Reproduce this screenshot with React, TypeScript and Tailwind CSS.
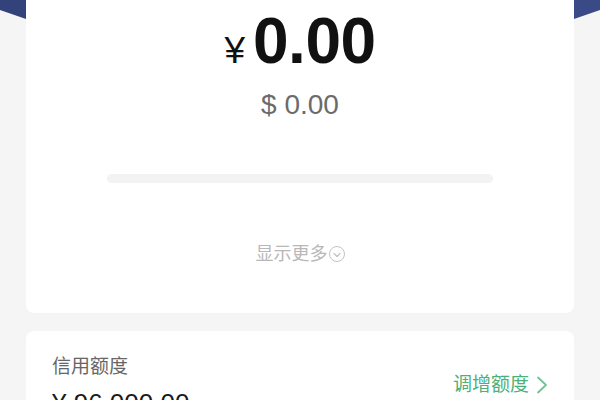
import { ChevronDown } from "lucide-react";

const sans = { fontFamily: '"Liberation Sans", "Noto Sans CJK SC", Arial, sans-serif' };

export default function App() {
  return (
    <div
      className="relative w-[600px] h-[400px] overflow-hidden bg-[#f5f5f6]"
      style={sans}
    >
      {/* navy header behind the card */}
      <svg className="absolute top-0 left-0" width="600" height="30" viewBox="0 0 600 30">
        <polygon points="0,0 26,0 26,19 0,10" fill="#33427a" />
        <polygon points="574,0 600,0 600,10 574,19" fill="#3a4a86" />
      </svg>

      <div className="relative mx-[26px] bg-white rounded-b-lg flex flex-col items-center pt-[10px] pb-[50px]">
        <div className="flex items-baseline text-[#111]">
          <span className="text-[37px] leading-none mr-[8px]">¥</span>
          <span className="text-[64px] leading-[63px] font-bold tracking-[-0.5px]">0.00</span>
        </div>
        <div className="mt-[18px] text-[28px] leading-[28px] text-[#6b6b6b]">$ 0.00</div>
        <div className="mt-[55px] w-[386px] h-[9px] rounded-full bg-[#f3f3f3]" />
        <div className="mt-[62px] flex items-center text-[18px] leading-[18px] text-[#b8b8b8]">
          <span>显示更多</span>
          <span className="ml-[1px] w-[16px] h-[16px] rounded-full border-[1.5px] border-[#c4c4c4] flex items-center justify-center">
            <ChevronDown size={12} strokeWidth={2.2} className="text-[#bdbdbd] mt-[1px]" />
          </span>
        </div>
      </div>

      <div className="mx-[26px] mt-[18px] bg-white rounded-lg flex items-start justify-between pl-[26px] pr-[26px] pt-[26px] pb-[20px]">
        <div className="flex flex-col">
          <span className="text-[19px] leading-[20px] text-[#666]">信用额度</span>
          <span className="mt-[12px] text-[26px] leading-[28px] text-[#1a1a1a]">¥ 96,000.00</span>
        </div>
        <div className="mt-[18px] flex items-center text-[19px] leading-[20px] text-[#4cb07a]">
          <span>调增额度</span>
          <svg className="ml-[7px]" width="12" height="18" viewBox="0 0 12 18" fill="none">
            <polyline points="2,1.5 10,9 2,16.5" stroke="#72c296" strokeWidth="1.8" strokeLinecap="round" strokeLinejoin="round" />
          </svg>
        </div>
      </div>
    </div>
  );
}
